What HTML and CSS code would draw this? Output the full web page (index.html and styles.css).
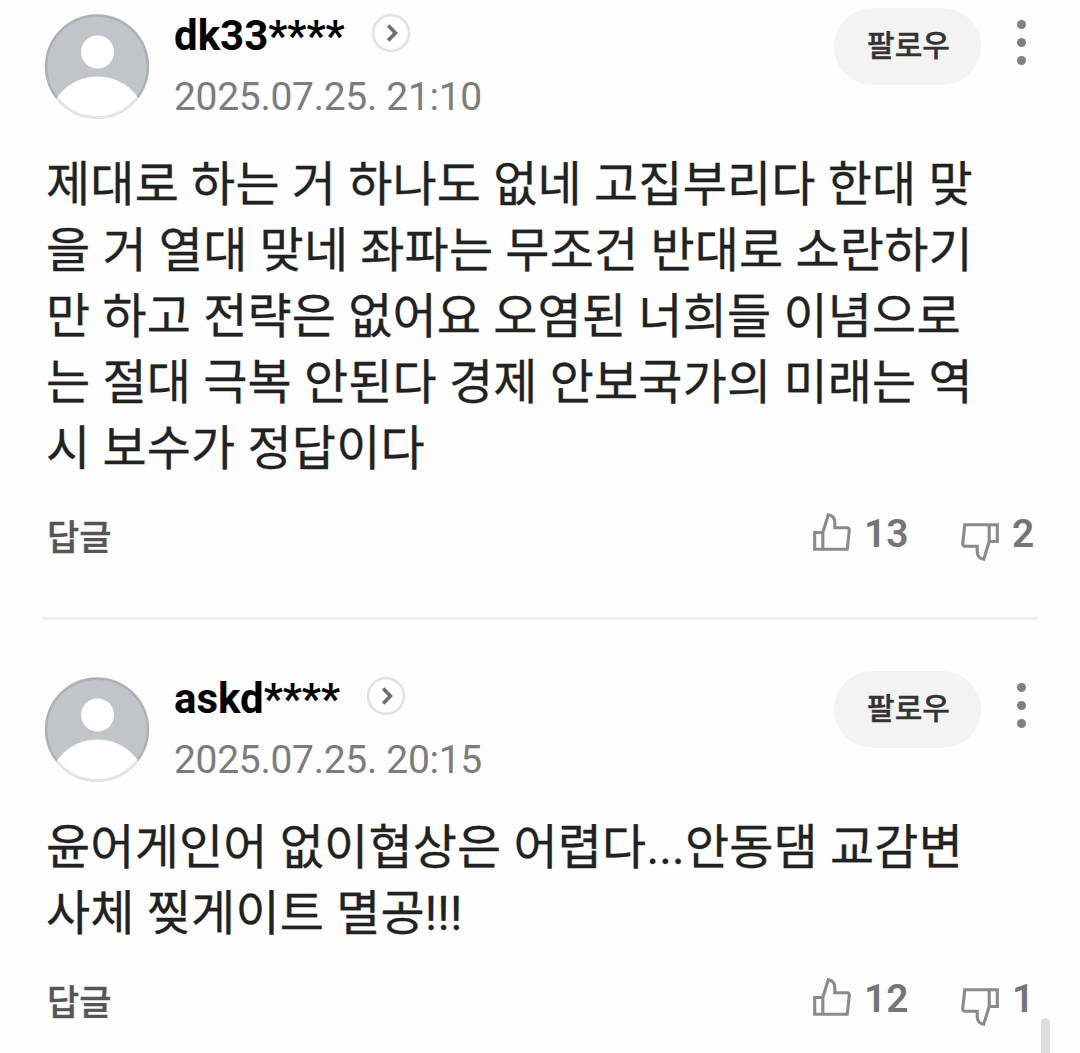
FILE: index.html
```
<!DOCTYPE html>
<html lang="ko">
<head>
  <meta charset="UTF-8">
  <meta name="viewport" content="width=device-width, initial-scale=1.0">
  <title>댓글</title>
  <link rel="stylesheet" href="styles.css">
</head>
<body>

  <!-- 공통 아이콘 -->
  <svg class="icon-defs" width="0" height="0">
    <symbol id="icon-user" viewBox="0 0 106 106">
      <clipPath id="user-clip"><circle cx="53" cy="52.5" r="52.2"/></clipPath>
      <g clip-path="url(#user-clip)">
        <rect width="106" height="106" fill="#c1c5ca"/>
        <circle cx="53.5" cy="38" r="16.5" fill="#fff"/>
        <circle cx="53.5" cy="112" r="49.5" fill="#fff"/>
      </g>
      <circle cx="53" cy="52.5" r="50.9" fill="none" stroke="#000" stroke-opacity=".1" stroke-width="2.6"/>
    </symbol>
    <symbol id="icon-arrow" viewBox="0 0 40 40">
      <circle cx="20" cy="20" r="17.9" fill="#fff" stroke="#e2e2e2" stroke-width="2.6"/>
      <path d="M17.2 12.6L24.4 20l-7.2 7.4" fill="none" stroke="#6e6e6e" stroke-width="3.6"/>
    </symbol>
    <symbol id="icon-thumb" viewBox="0 0 38 38">
      <path d="M1.7 19.5H9.8V36.3H1.7ZM9.8 36.3H34.2L36.3 17.5Q36.3 14.7 34 14.7H21.8V9Q21.5 2.7 15.3 1.7L9.8 19.5" fill="none" stroke="#8a8a8a" stroke-width="3.1" stroke-linejoin="miter"/>
    </symbol>
  </svg>

  <div class="comment-list">
    <div class="comment">
      <div class="comment-head">
        <svg class="avatar"><use href="#icon-user"/></svg>
        <div class="info">
          <div class="name-row">
            <span class="name">dk33****</span>
            <svg class="arrow"><use href="#icon-arrow"/></svg>
          </div>
          <div class="date">2025.07.25. 21:10</div>
        </div>
        <button class="follow" type="button">팔로우</button>
        <button class="more" type="button"><i></i><i></i><i></i></button>
      </div>
      <p class="text">제대로 하는 거 하나도 없네 고집부리다 한대 맞<br>을 거 열대 맞네 좌파는 무조건 반대로 소란하기<br>만 하고 전략은 없어요 오염된 너희들 이념으로<br>는 절대 극복 안된다 경제 안보국가의 미래는 역<br>시 보수가 정답이다</p>
      <div class="comment-foot">
        <span class="reply">답글</span>
        <span class="vote up"><svg class="thumb"><use href="#icon-thumb"/></svg><b>13</b></span>
        <span class="vote down"><svg class="thumb"><use href="#icon-thumb"/></svg><b>2</b></span>
      </div>
    </div>

    <div class="comment">
      <div class="comment-head">
        <svg class="avatar"><use href="#icon-user"/></svg>
        <div class="info">
          <div class="name-row">
            <span class="name">askd****</span>
            <svg class="arrow"><use href="#icon-arrow"/></svg>
          </div>
          <div class="date">2025.07.25. 20:15</div>
        </div>
        <button class="follow" type="button">팔로우</button>
        <button class="more" type="button"><i></i><i></i><i></i></button>
      </div>
      <p class="text">윤어게인어 없이협상은 어렵다...안동댐 교감변<br>사체 찢게이트 멸공!!!</p>
      <div class="comment-foot">
        <span class="reply">답글</span>
        <span class="vote up"><svg class="thumb"><use href="#icon-thumb"/></svg><b>12</b></span>
        <span class="vote down"><svg class="thumb"><use href="#icon-thumb"/></svg><b>1</b></span>
      </div>
    </div>
  </div>

  <div class="scrollbar"></div>

</body>
</html>
```
FILE: styles.css
```
* {
  box-sizing: border-box;
}

body {
  margin: 0;
  background-color: #fdfdfd;
  font-family: Roboto, "Noto Sans CJK KR", sans-serif;
}

button {
  border: none;
  padding: 0;
  font-family: inherit;
}

.icon-defs {
  position: absolute;
}

.comment-list {
  padding: 0 42px;
}

.comment {
  height: 433px;
  padding-top: 51px;
}

.comment:first-child {
  height: 620px;
  padding-top: 8px;
  border-bottom: 3px solid #eeeeee;
}

.comment-head {
  display: flex;
  align-items: flex-start;
  height: 144px;
  padding-left: 2px;
}

.avatar {
  width: 106px;
  height: 106px;
  margin-top: 6px;
}

.info {
  flex: 1;
  padding-left: 24px;
}

.name-row {
  display: flex;
  align-items: flex-start;
  height: 54px;
}

.name {
  padding-top: 2px;
  font-size: 42px;
  font-weight: 700;
  line-height: 52px;
  color: #000;
}

.arrow {
  width: 40px;
  height: 40px;
  margin: 5px 0 0 26px;
}

.date {
  margin-top: 9px;
  font-size: 39px;
  line-height: 52px;
  letter-spacing: -0.3px;
  color: #7c7c7c;
}

.follow {
  width: 147px;
  height: 77px;
  padding: 0 0 8px 2px;
  border-radius: 39px;
  background-color: #f3f3f3;
  color: #333;
  font-size: 30px;
  font-weight: 500;
  -webkit-text-stroke: 0.4px #333;
}

.more {
  display: flex;
  flex-direction: column;
  gap: 9px;
  margin: 12px 12px 0 36px;
  background: none;
}

.more i {
  width: 9px;
  height: 9px;
  border-radius: 50%;
  background-color: #808080;
}

.text {
  margin: 0;
  padding-left: 4px;
  font-size: 48px;
  line-height: 66px;
  letter-spacing: 0.17px;
  color: #222;
  white-space: nowrap;
  -webkit-text-stroke: 0.3px #222;
}

.comment-foot {
  display: flex;
  align-items: flex-start;
  height: 56px;
  margin-top: 27px;
  padding-left: 5px;
}

.reply {
  flex: 1;
  padding-top: 5px;
  font-size: 35px;
  font-weight: 500;
  line-height: 50px;
  color: #555;
  -webkit-text-stroke: 0.4px #555;
}

.vote {
  display: flex;
  align-items: flex-start;
  color: #757575;
}

.vote.up {
  width: 148px;
}

.vote.down {
  width: 77px;
}

.vote b {
  padding-top: 2px;
  margin-left: 13px;
  font-size: 39px;
  font-weight: 600;
  line-height: 46px;
}

.thumb {
  width: 38px;
  height: 38px;
  margin-top: 4px;
}

.down .thumb {
  margin-top: 14px;
  transform: rotate(180deg);
}

.scrollbar {
  position: fixed;
  right: 30px;
  bottom: 0;
  width: 9px;
  height: 35px;
  border-radius: 5px 5px 0 0;
  background-color: #dddddf;
}
```
